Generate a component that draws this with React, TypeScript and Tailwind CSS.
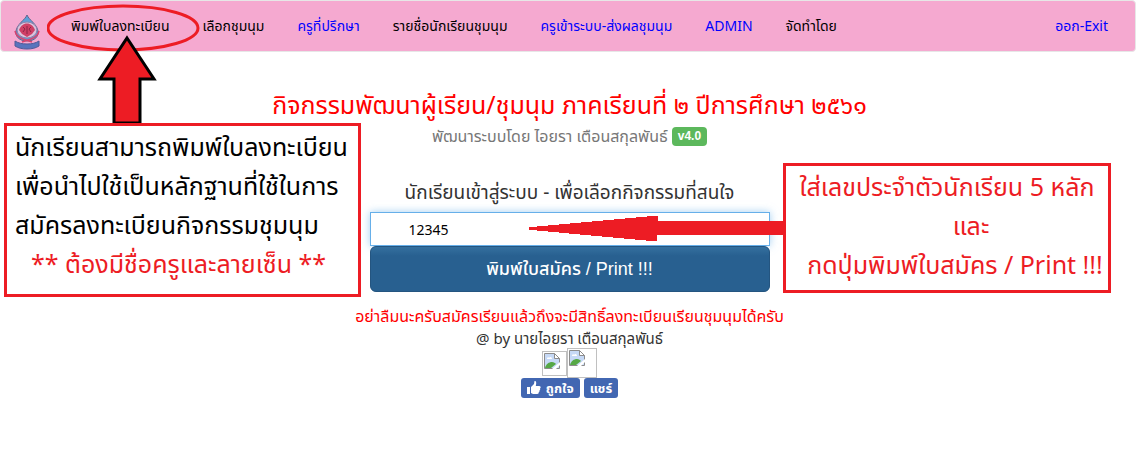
import React, { useState } from 'react'

interface MenuItem {
  label: string;
  color: string;
}

const menuItems: MenuItem[] = [
  { label: 'พิมพ์ใบลงทะเบียน', color: 'text-black' },
  { label: 'เลือกชุมนุม', color: 'text-black' },
  { label: 'ครูที่ปรึกษา', color: 'text-[#0000ff]' },
  { label: 'รายชื่อนักเรียนชุมนุม', color: 'text-black' },
  { label: 'ครูเข้าระบบ-ส่งผลชุมนุม', color: 'text-[#0000ff]' },
  { label: 'ADMIN', color: 'text-[#0000ff]' },
  { label: 'จัดทำโดย', color: 'text-black' },
]

const SchoolLogo: React.FC = () => (
  <svg viewBox="0 0 26 36" className="h-9 w-[26px]" role="img" aria-label="โลโก้โรงเรียน">
    <path d="M13 1C11 6 3 10 2 17c-1 5 3 10 11 10s12-5 11-10C23 10 15 6 13 1z" fill="#5d9fd8" stroke="#64648c" />
    <ellipse cx="13" cy="16" rx="10" ry="8" fill="#d9c3dc" stroke="#8f7fa8" />
    <path d="M5 16c1-3 3-5 4-5 1-2 7-2 8 0 1 0 3 2 4 5l-3 4-5 3-5-3z" fill="#cf3f66" />
    <path d="M9 13l2 2-2 3M17 13l-2 2 2 3M13 12v8" fill="none" stroke="#8a2747" />
    <path d="M1 17c1 5 5 7 8 8l9 3M25 17c-1 5-5 7-8 8l-9 3" fill="none" stroke="#d8436f" strokeWidth="1.500" />
    <path d="M1 27c3 2 7 3 12 3s9-1 12-3v5c-3 2-7 3-12 3S4 34 1 32z" fill="#5874bd" stroke="#505b98" />
  </svg>
)

const BrokenImage: React.FC<{ className: string }> = ({ className }) => (
  <span className={`border border-[#c0c0c0] p-px ${className}`}>
    <svg viewBox="0 0 16 16" className="size-4">
      <path d="M.5.5h10l5 5v10H.5z" fill="#c6d9f6" stroke="#8c8c8c" />
      <path d="M10.500.5v5h5z" fill="#fff" stroke="#8c8c8c" />
      <path d="M3 6c0-2 2-2 2-1 1-2 3-1 3 1z" fill="#fff" />
      <path d="M1 15c1-4 4-6 7-6 2 0 3 1 4 2l-5 4z" fill="#56a846" />
      <path d="M8 16l8-7v3l-4 4z" fill="#fff" />
    </svg>
  </span>
)

const App: React.FC = () => {
  const [studentId, setStudentId] = useState('12345')

  return (
    <div className="relative min-h-screen bg-white font-['Noto_Sans','Noto_Sans_Thai','Liberation_Sans',sans-serif] text-sm text-[#333]">
      <nav className="flex items-center gap-px rounded border border-[#e7e7e7] bg-[#f5a9d0] pr-3 pl-[13px]">
        <a href="#" className="mt-3 mr-[14px]"><SchoolLogo /></a>
        {menuItems.map(item => (
          <a key={item.label} href="#" className={`px-4 py-[15px] leading-5 whitespace-nowrap ${item.color}`}>
            {item.label}
          </a>
        ))}
        <a href="#" className="ml-auto px-[15px] leading-5 whitespace-nowrap text-[#0000ff]">ออก-Exit</a>
      </nav>

      <main className="flex flex-col items-center pt-9 pl-[3px] text-center">
        <h1 className="text-[25px] leading-8 whitespace-nowrap text-[#ff0000]">
          กิจกรรมพัฒนาผู้เรียน/ชุมนุม ภาคเรียนที่ ๒ ปีการศึกษา ๒๕๖๑
        </h1>
        <p className="flex items-center gap-1 text-base leading-8 whitespace-nowrap text-[#777]">
          พัฒนาระบบโดย ไอยรา เตือนสกุลพันธ์
          <span className="rounded bg-[#5cb85c] px-[6px] font-['Liberation_Sans',sans-serif] text-xs leading-[19px] font-bold text-white">v4.0</span>
        </p>
        <form className="mt-6 w-[400px]" onSubmit={event => event.preventDefault()}>
          <label htmlFor="studentId" className="block h-9 text-[19px] leading-8 whitespace-nowrap">
            นักเรียนเข้าสู่ระบบ - เพื่อเลือกกิจกรรมที่สนใจ
          </label>
          <input
            id="studentId"
            type="text"
            value={studentId}
            onChange={event => setStudentId(event.target.value)}
            className="block h-[34px] w-full border border-[#66afe9] bg-white px-[38px] text-sm text-black shadow-[0_0_8px_rgba(102,175,233,0.6)] outline-none"
          />
          <button
            type="submit"
            className="h-[46px] w-full rounded-md border border-[#245580] bg-[#286090] bg-linear-to-b from-[#34709f] to-[#286090] to-20% font-['Liberation_Sans','Noto_Sans_Thai',sans-serif] text-lg font-medium text-white"
          >
            พิมพ์ใบสมัคร / Print !!!
          </button>
        </form>
        <p className="mt-3 text-base leading-6 whitespace-nowrap text-[#ff0000]">
          อย่าลืมนะครับสมัครเรียนแล้วถึงจะมีสิทธิ์ลงทะเบียนเรียนชุมนุมได้ครับ
        </p>
        <p className="text-[15px] leading-5">@ by นายไอยรา เตือนสกุลพันธ์</p>
        <div className="flex items-end">
          <BrokenImage className="mb-[2px] size-[25px]" />
          <BrokenImage className="size-[30px]" />
        </div>
        <div className="flex gap-1">
          <button type="button" className="flex h-5 items-center gap-[5px] rounded-[3px] bg-[#4267b2] px-[6px] text-[13px] leading-5 font-bold text-white">
            <svg viewBox="0 0 14 14" className="size-[14px]" fill="#fff">
              <path d="M0 6h3v7H0zM4 6l3-3 .5-3c2 0 2 2 1.300 5H12c2 0 2 2 1 2.500.5 1 0 1.700-.6 2 .3 1-.2 1.500-.7 1.800.2 1-.4 1.700-1.400 1.700H6l-2-1z" />
            </svg>
            ถูกใจ
          </button>
          <button type="button" className="h-5 rounded-[3px] bg-[#4267b2] px-[6px] text-[13px] leading-5 font-bold text-white">แชร์</button>
        </div>
      </main>

      {/* instruction callouts drawn on top of the page */}
      <svg viewBox="0 0 154 50" className="absolute top-1 left-[47px] h-[50px] w-[154px]" fill="none">
        <ellipse cx="76" cy="24" rx="75" ry="22" stroke="#ed1c24" strokeWidth="3" />
      </svg>
      <svg viewBox="0 0 60 90" className="absolute top-[35px] left-[97px] h-[90px] w-[60px]">
        <path d="M30 3L57 44H43V88H17V44H3z" fill="#ed1c24" stroke="#000" strokeWidth="3" />
      </svg>
      <aside className="absolute top-[123px] left-1 h-[174px] w-[357px] border-3 border-[#ed1c24] bg-white pt-px pl-2 text-[25px] leading-[39px] whitespace-nowrap text-black">
        <p>นักเรียนสามารถพิมพ์ใบลงทะเบียน</p>
        <p>เพื่อนำไปใช้เป็นหลักฐานที่ใช้ในการ</p>
        <p>สมัครลงทะเบียนกิจกรรมชุมนุม</p>
        <p className="pl-4 text-[#ed1c24]">** ต้องมีชื่อครูและลายเซ็น **</p>
      </aside>
      <svg viewBox="0 0 256 26" className="absolute top-[215px] left-[529px] h-[26px] w-[256px]">
        <path d="M0 12h8v-1h11v-1h11V9h11V8h11V7h11V6h11V5h11V4h11V3h11V2h11V1h11v5h139v14H128v6h-11v-1h-11v-1H95v-1H84v-1H73v-1H62v-1H51v-1H40v-1H30v-1H19v-1H8v-1H0z" fill="#ed1c24" />
      </svg>
      <aside className="absolute top-[163px] left-[783px] h-[130px] w-[328px] border-3 border-[#ed1c24] bg-white pt-px text-center text-[25px] leading-[39px] whitespace-nowrap text-[#ed1c24]">
        <p>ใส่เลขประจำตัวนักเรียน 5 หลัก</p>
        <p className="pl-12">และ</p>
        <p className="pl-4">กดปุ่มพิมพ์ใบสมัคร / Print !!!</p>
      </aside>
    </div>
  )
}

export default App
